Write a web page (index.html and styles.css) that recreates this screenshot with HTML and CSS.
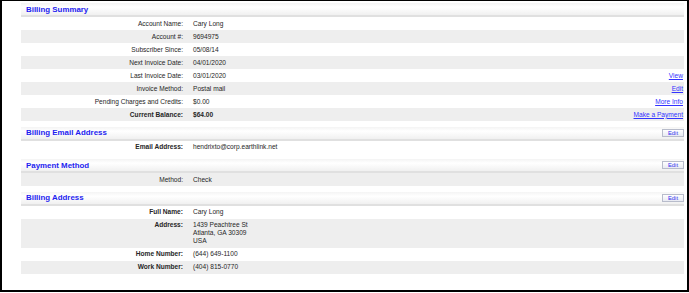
FILE: index.html
```
<!DOCTYPE html>
<html lang="en">
<head>
    <meta charset="UTF-8">
    <meta name="viewport" content="width=device-width, initial-scale=1.0">
    <title>Billing</title>
    <link rel="stylesheet" href="styles.css">
</head>
<body>

<div class="frame">

    <!-- Billing Summary -->
    <div class="section">
        <div class="section-head">
            <span class="section-title">Billing Summary</span>
        </div>
        <div class="row">
            <span class="label">Account Name:</span>
            <span class="value">Cary Long</span>
            <span class="action"></span>
        </div>
        <div class="row alt">
            <span class="label">Account #:</span>
            <span class="value">9694975</span>
            <span class="action"></span>
        </div>
        <div class="row">
            <span class="label">Subscriber Since:</span>
            <span class="value">05/08/14</span>
            <span class="action"></span>
        </div>
        <div class="row alt">
            <span class="label">Next Invoice Date:</span>
            <span class="value">04/01/2020</span>
            <span class="action"></span>
        </div>
        <div class="row">
            <span class="label">Last Invoice Date:</span>
            <span class="value">03/01/2020</span>
            <span class="action"><a href="#">View</a></span>
        </div>
        <div class="row alt">
            <span class="label">Invoice Method:</span>
            <span class="value">Postal mail</span>
            <span class="action"><a href="#">Edit</a></span>
        </div>
        <div class="row">
            <span class="label">Pending Charges and Credits:</span>
            <span class="value">$0.00</span>
            <span class="action"><a href="#">More Info</a></span>
        </div>
        <div class="row alt">
            <span class="label bold">Current Balance:</span>
            <span class="value bold">$64.00</span>
            <span class="action"><a href="#">Make a Payment</a></span>
        </div>
    </div>

    <!-- Billing Email Address -->
    <div class="section">
        <div class="section-head">
            <span class="section-title">Billing Email Address</span>
            <button class="edit-btn">Edit</button>
        </div>
        <div class="row">
            <span class="label bold">Email Address:</span>
            <span class="value">hendrixto@corp.earthlink.net</span>
            <span class="action"></span>
        </div>
    </div>

    <!-- Payment Method -->
    <div class="section">
        <div class="section-head">
            <span class="section-title">Payment Method</span>
            <button class="edit-btn">Edit</button>
        </div>
        <div class="row alt">
            <span class="label">Method:</span>
            <span class="value">Check</span>
            <span class="action"></span>
        </div>
    </div>

    <!-- Billing Address -->
    <div class="section">
        <div class="section-head">
            <span class="section-title">Billing Address</span>
            <button class="edit-btn">Edit</button>
        </div>
        <div class="row">
            <span class="label bold">Full Name:</span>
            <span class="value">Cary Long</span>
            <span class="action"></span>
        </div>
        <div class="row alt">
            <span class="label bold">Address:</span>
            <span class="value">1439 Peachtree St<br>Atlanta, GA 30309<br>USA</span>
            <span class="action"></span>
        </div>
        <div class="row">
            <span class="label bold">Home Number:</span>
            <span class="value">(644) 649-1100</span>
            <span class="action"></span>
        </div>
        <div class="row alt">
            <span class="label bold">Work Number:</span>
            <span class="value">(404) 815-0770</span>
            <span class="action"></span>
        </div>
    </div>

</div>

</body>
</html>
```

FILE: styles.css
```
body {
    margin: 0;
    font-family: 'Liberation Sans', Arial, sans-serif;
    background-color: #ffffff;
    color: #262626;
}

.frame {
    width: 689px;
    height: 292px;
    box-sizing: border-box;
    border-top: 1px solid #000000;
    border-left: 2px solid #000000;
    border-right: 2px solid #000000;
    border-bottom: 2px solid #000000;
    padding: 2px 3px 0 19px;
}

.section {
    margin-top: 5.5px;
}

.section:first-child {
    margin-top: 0;
}

.section-head {
    display: flex;
    align-items: center;
    justify-content: space-between;
    height: 14px;
    box-sizing: border-box;
    padding: 0 0 0 5px;
    background: linear-gradient(#f4f4f4, #ffffff 35%, #f0f0f0);
    border-bottom: 2px solid #e0e0e0;
}

.section-title {
    font-size: 7.9px;
    font-weight: bold;
    color: #1e1ef0;
}

.edit-btn {
    width: 22px;
    height: 8px;
    padding: 0;
    margin: 0;
    border: 1px solid #b8bccb;
    background: linear-gradient(#ffffff, #e8eaf2);
    font-family: 'Liberation Sans', Arial, sans-serif;
    font-size: 5.8px;
    line-height: 6px;
    color: #3333ee;
}

.row {
    display: grid;
    grid-template-columns: 162px 1fr auto;
    column-gap: 10px;
    padding: 2.5px 1px 2.5px 0;
    font-size: 6.6px;
    line-height: 8px;
}

.row.alt {
    background-color: #eeeeee;
}

.label {
    text-align: right;
}

.bold {
    font-weight: bold;
}

.action {
    text-align: right;
}

.action a {
    color: #3333ff;
    text-decoration: underline;
}
```
